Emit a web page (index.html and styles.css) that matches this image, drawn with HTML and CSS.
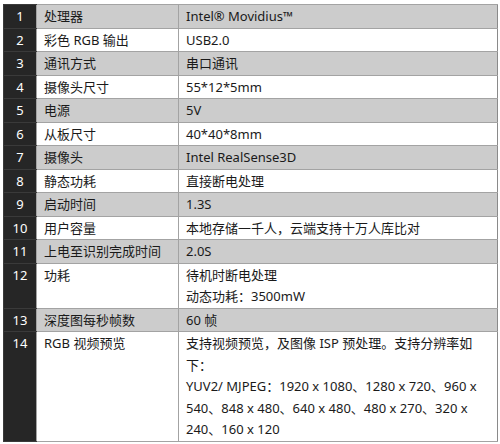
FILE: index.html
```html
<!DOCTYPE html>
<html lang="zh">
<head>
<meta charset="utf-8">
<link rel="stylesheet" href="styles.css">
</head>
<body>
<table class="spec">
  <colgroup><col class="c-num"><col class="c-key"><col class="c-val"></colgroup>
  <tbody>
    <tr class="alt"><td class="num">1</td><td>处理器</td><td>Intel® Movidius™</td></tr>
    <tr><td class="num">2</td><td>彩色 RGB 输出</td><td>USB2.0</td></tr>
    <tr class="alt"><td class="num">3</td><td>通讯方式</td><td>串口通讯</td></tr>
    <tr><td class="num">4</td><td>摄像头尺寸</td><td>55*12*5mm</td></tr>
    <tr class="alt"><td class="num">5</td><td>电源</td><td>5V</td></tr>
    <tr><td class="num">6</td><td>从板尺寸</td><td>40*40*8mm</td></tr>
    <tr class="alt"><td class="num">7</td><td>摄像头</td><td>Intel RealSense3D</td></tr>
    <tr><td class="num">8</td><td>静态功耗</td><td>直接断电处理</td></tr>
    <tr class="alt"><td class="num">9</td><td>启动时间</td><td>1.3S</td></tr>
    <tr><td class="num">10</td><td>用户容量</td><td>本地存储一千人，云端支持十万人库比对</td></tr>
    <tr class="alt"><td class="num">11</td><td>上电至识别完成时间</td><td>2.0S</td></tr>
    <tr><td class="num">12</td><td>功耗</td><td>待机时断电处理<br>动态功耗：3500mW</td></tr>
    <tr class="alt"><td class="num">13</td><td>深度图每秒帧数</td><td>60 帧</td></tr>
    <tr><td class="num">14</td><td>RGB 视频预览</td><td>支持视频预览，及图像 ISP 预处理。支持分辨率如下：<br>YUV2/ MJPEG：1920 x 1080、1280 x 720、960 x 540、848 x 480、640 x 480、480 x 270、320 x 240、160 x 120</td></tr>
  </tbody>
</table>
</body>
</html>
```
FILE: styles.css
```css
html, body {
  margin: 0;
  padding: 0;
  background: #ffffff;
}
body {
  padding: 4px 3px 0 3px;
  font-family: "Noto Sans", "Noto Sans CJK SC", sans-serif;
  font-size: 13px;
  color: #1a1a1a;
}
.spec {
  border-collapse: collapse;
  table-layout: fixed;
  width: 494px;
  border: 1px solid #8a8a8a;
}
.c-num { width: 33px; }
.c-key { width: 142px; }
.c-val { width: 319px; }
.spec td {
  border-top: 1px solid #a3a3a3;
  border-bottom: 1px solid #a3a3a3;
  border-left: 1px solid #a3a3a3;
  padding: 1px 7px 0 7px;
  line-height: 21.5px;
  vertical-align: top;
  text-align: left;
  word-break: normal;
  line-break: strict;
}
.spec tr.alt td { background: #cccccc; }
.spec td.num,
.spec tr.alt td.num {
  background: #262626;
  color: #ffffff;
  text-align: center;
  padding: 1px 0 0 0;
  border-color: #3a3a3a;
}
```
